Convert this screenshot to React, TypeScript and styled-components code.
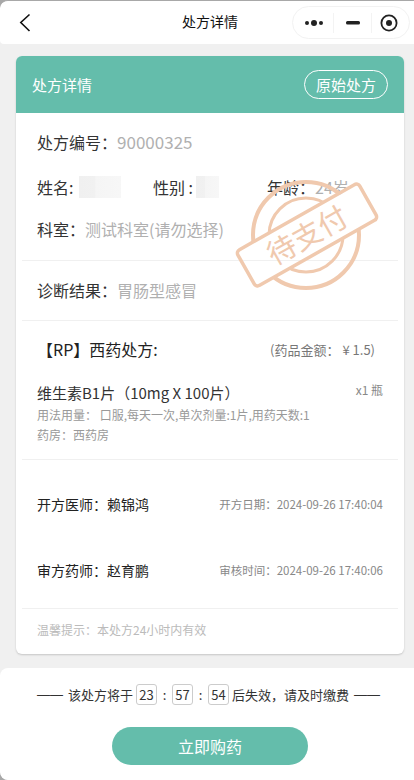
import React from "react";
import styled, { createGlobalStyle } from "styled-components";

const GlobalStyle = createGlobalStyle`
  html, body {
    margin: 0;
    padding: 0;
    background: #a8a8a8;
  }
  * {
    box-sizing: border-box;
  }
`;

const Screen = styled.div`
  position: relative;
  width: 414px;
  height: 780px;
  display: flex;
  flex-direction: column;
  overflow: hidden;
  background: #f0f0f0;
  border-top: 1px solid #a8a8a8;
  border-radius: 8px 0 0 8px;
  font-family: "Noto Sans CJK SC", "Noto Sans", sans-serif;
  color: #333;
`;

const Nav = styled.div`
  position: relative;
  flex: 0 0 43px;
  display: flex;
  align-items: center;
  justify-content: center;
  padding: 0 0 3px 6px;
  background: #fff;
  border-radius: 8px 0 0 4px;
  font-size: 14px;
  color: #111;
`;

const BackIcon = styled.svg`
  position: absolute;
  left: 19px;
  top: 12px;
`;

const Capsule = styled.div`
  position: absolute;
  left: 292px;
  top: 5px;
  width: 118px;
  height: 33px;
  display: grid;
  grid-template-columns: 41px 38px 39px;
  align-items: center;
  justify-items: center;
  border: 1px solid #f2f2f2;
  border-radius: 17px;
`;

const CapsuleCell = styled.div<{ $line?: boolean; $shift?: number }>`
  width: 100%;
  height: 20px;
  display: flex;
  align-items: center;
  justify-content: center;
  padding-left: ${(p) => Math.max(p.$shift ?? 0, 0)}px;
  padding-right: ${(p) => Math.max(-(p.$shift ?? 0), 0)}px;
  border-right: ${(p) => (p.$line ? "1px solid #f3f3f3" : "none")};
`;

const Content = styled.div`
  flex: 1;
  padding: 12px 10px 14px 16px;
`;

const Card = styled.div`
  position: relative;
  height: 598px;
  background: #fff;
  border-radius: 6px;
  box-shadow: 0 1px 2px rgba(0, 0, 0, 0.18);
  overflow: hidden;
`;

const CardHead = styled.div`
  height: 57px;
  display: flex;
  align-items: center;
  justify-content: space-between;
  padding: 0 16px;
  background: #64bdab;
  color: #fff;
  font-size: 15px;
`;

const OriginBtn = styled.div`
  width: 84px;
  height: 29px;
  display: flex;
  align-items: center;
  justify-content: center;
  border: 1px solid #fff;
  border-radius: 15px;
  font-size: 15px;
`;

const CardBody = styled.div`
  padding: 0 6px;
`;

const Section = styled.div<{ $h: number; $last?: boolean }>`
  display: flow-root;
  height: ${(p) => p.$h}px;
  padding: 0 15px;
  border-bottom: ${(p) => (p.$last ? "none" : "1px solid #f0f0f0")};
`;

const InfoRow = styled.div<{ $top: number }>`
  display: flex;
  align-items: center;
  height: 24px;
  margin-top: ${(p) => p.$top}px;
  font-size: 16px;
  line-height: 24px;
`;

const PersonRow = styled(InfoRow)`
  display: grid;
  grid-template-columns: 116px 114px auto;
`;

const Field = styled.div`
  display: flex;
  align-items: center;
`;

const Label = styled.span`
  color: #333;
  white-space: nowrap;
`;

const Value = styled.span<{ $size?: number }>`
  color: #b0b0b0;
  font-size: ${(p) => p.$size ?? 16}px;
  white-space: nowrap;
`;

const Blur = styled.div<{ $w: number; $gap: number }>`
  width: ${(p) => p.$w}px;
  height: 22px;
  margin-left: ${(p) => p.$gap}px;
  background: linear-gradient(90deg, #f0f0f0 0%, #f1f1f1 38%, #f5f5f5 40%, #f7f7f7 100%);
`;

const RpRow = styled.div`
  display: flex;
  align-items: center;
  justify-content: space-between;
  height: 24px;
  margin-top: 16px;
  padding-right: 8px;
`;

const RpTitle = styled.div`
  font-size: 16px;
  color: #222;
`;

const RpAmount = styled.div`
  font-size: 13px;
  color: #777;
`;

const DrugRow = styled.div`
  display: flex;
  justify-content: space-between;
  margin-top: 20px;
`;

const DrugName = styled.div`
  font-size: 15px;
  line-height: 24px;
  color: #333;
`;

const DrugQty = styled.div`
  font-size: 12px;
  line-height: 18px;
  color: #888;
`;

const DrugNote = styled.div`
  font-size: 12px;
  line-height: 20px;
  color: #999;
`;

const SignRow = styled.div<{ $top: number }>`
  display: flex;
  align-items: center;
  justify-content: space-between;
  height: 22px;
  margin-top: ${(p) => p.$top}px;
`;

const SignName = styled.div`
  font-size: 14px;
  color: #222;
`;

const SignDate = styled.div`
  font-size: 11.5px;
  color: #888;
`;

const Tip = styled.div`
  margin-top: 12px;
  font-size: 12px;
  line-height: 18px;
  color: #bbb;
`;

const Stamp = styled.svg`
  position: absolute;
  left: 219px;
  top: 123px;
  pointer-events: none;
`;

const Footer = styled.div`
  flex: 0 0 112px;
  display: flex;
  flex-direction: column;
  align-items: center;
  background: #fff;
  border-radius: 8px 0 0 8px;
`;

const Countdown = styled.div`
  display: flex;
  align-items: center;
  height: 21px;
  margin-top: 16px;
  margin-left: 3px;
  font-size: 13px;
  color: #333;
  white-space: nowrap;
`;

const Dash = styled.span<{ $side: "left" | "right" }>`
  font-family: "Liberation Sans", sans-serif;
  margin-${(p) => p.$side}: 0;
  margin-${(p) => (p.$side === "left" ? "right" : "left")}: 5px;
`;

const TimeBox = styled.span`
  display: inline-flex;
  align-items: center;
  justify-content: center;
  width: 21px;
  height: 21px;
  margin: 0 3px;
  border: 1px solid #ccc;
  border-radius: 3px;
  font-size: 13px;
  color: #333;
`;

const Colon = styled.span`
  width: 9px;
  text-align: center;
`;

const BuyBtn = styled.div`
  width: 196px;
  height: 38px;
  display: flex;
  align-items: center;
  justify-content: center;
  margin-top: 22px;
  margin-left: 6px;
  border-radius: 19px;
  background: #64bdab;
  color: #fff;
  font-size: 16px;
`;

// full-width punctuation used by the page text
const C = "\uFF1A";
const L = "\uFF08";
const R = "\uFF09";

export default function App() {
  return (
    <>
      <GlobalStyle />
      <Screen>
        <Nav>
          <BackIcon width="12" height="20" viewBox="0 0 12 20" fill="none">
            <path d="M10.5 1.5L1.8 9.5L10.5 18" stroke="#111" strokeWidth="1.6" />
          </BackIcon>
          处方详情
          <Capsule>
            <CapsuleCell $line $shift={2}>
              <svg width="20" height="8" viewBox="0 0 20 8">
                <circle cx="3" cy="4" r="2" fill="#222" />
                <circle cx="10" cy="4" r="3" fill="#222" />
                <circle cx="17" cy="4" r="2" fill="#222" />
              </svg>
            </CapsuleCell>
            <CapsuleCell $line>
              <svg width="14" height="4" viewBox="0 0 14 4">
                <rect width="14" height="3.4" rx="1.5" fill="#222" />
              </svg>
            </CapsuleCell>
            <CapsuleCell $shift={-5}>
              <svg width="18" height="18" viewBox="0 0 18 18" fill="none">
                <circle cx="9" cy="9" r="7.6" stroke="#222" strokeWidth="1.8" />
                <circle cx="9" cy="9" r="3" fill="#222" />
              </svg>
            </CapsuleCell>
          </Capsule>
        </Nav>
        <Content>
          <Card>
            <CardHead>
              处方详情
              <OriginBtn>原始处方</OriginBtn>
            </CardHead>
            <CardBody>
              <Section $h={148}>
                <InfoRow $top={17}>
                  <Label>处方编号{C}</Label>
                  <Value $size={17}>90000325</Value>
                </InfoRow>
                <PersonRow $top={21}>
                  <Field>
                    <Label>姓名:</Label>
                    <Blur $w={42} $gap={6} />
                  </Field>
                  <Field>
                    <Label>性别 :</Label>
                    <Blur $w={23} $gap={3} />
                  </Field>
                  <Field>
                    <Label>年龄{C}</Label>
                    <Value>24岁</Value>
                  </Field>
                </PersonRow>
                <InfoRow $top={18}>
                  <Label>科室{C}</Label>
                  <Value>测试科室(请勿选择)</Value>
                </InfoRow>
              </Section>
              <Section $h={60}>
                <InfoRow $top={17}>
                  <Label>诊断结果{C}</Label>
                  <Value>胃肠型感冒</Value>
                </InfoRow>
              </Section>
              <Section $h={139}>
                <RpRow>
                  <RpTitle>【RP】西药处方:</RpTitle>
                  <RpAmount>(药品金额{C} ¥ 1.5)</RpAmount>
                </RpRow>
                <DrugRow>
                  <DrugName>维生素B1片{L}10mg X 100片{R}</DrugName>
                  <DrugQty>x1 瓶</DrugQty>
                </DrugRow>
                <DrugNote>用法用量{C} 口服,每天一次,单次剂量:1片,用药天数:1</DrugNote>
                <DrugNote>药房{C}西药房</DrugNote>
              </Section>
              <Section $h={149}>
                <SignRow $top={33}>
                  <SignName>开方医师{C}赖锦鸿</SignName>
                  <SignDate>开方日期{C}2024-09-26 17:40:04</SignDate>
                </SignRow>
                <SignRow $top={44}>
                  <SignName>审方药师{C}赵育鹏</SignName>
                  <SignDate>审核时间{C}2024-09-26 17:40:06</SignDate>
                </SignRow>
              </Section>
              <Section $h={44} $last>
                <Tip>温馨提示{C}本处方24小时内有效</Tip>
              </Section>
            </CardBody>
            <Stamp width="144" height="112" viewBox="0 0 144 112" fill="none">
              <defs>
                <mask id="stampMask">
                  <rect width="144" height="112" fill="#fff" />
                  <rect x="2" y="35.5" width="140" height="41" rx="4" fill="#000" transform="rotate(-29.5 72 56)" />
                </mask>
              </defs>
              <g stroke="#f0c9ae" mask="url(#stampMask)">
                <circle cx="71" cy="56" r="53" strokeWidth="4" />
                <circle cx="71" cy="56" r="37" strokeWidth="3" />
              </g>
              <g transform="rotate(-29.5 72 56)">
                <rect x="2" y="35.5" width="140" height="41" rx="4" stroke="#f0c9ae" strokeWidth="3.5" />
                <text
                  x="72"
                  y="67"
                  textAnchor="middle"
                  fontSize="29"
                  fill="#f0c9ae"
                  fontFamily="'Noto Sans CJK SC', sans-serif"
                >
                  待支付
                </text>
              </g>
            </Stamp>
          </Card>
        </Content>
        <Footer>
          <Countdown>
            <Dash $side="left">——</Dash>
            该处方将于
            <TimeBox>23</TimeBox>
            <Colon>:</Colon>
            <TimeBox>57</TimeBox>
            <Colon>:</Colon>
            <TimeBox>54</TimeBox>
            后失效{"\uFF0C"}请及时缴费
            <Dash $side="right">——</Dash>
          </Countdown>
          <BuyBtn>立即购药</BuyBtn>
        </Footer>
      </Screen>
    </>
  );
}
